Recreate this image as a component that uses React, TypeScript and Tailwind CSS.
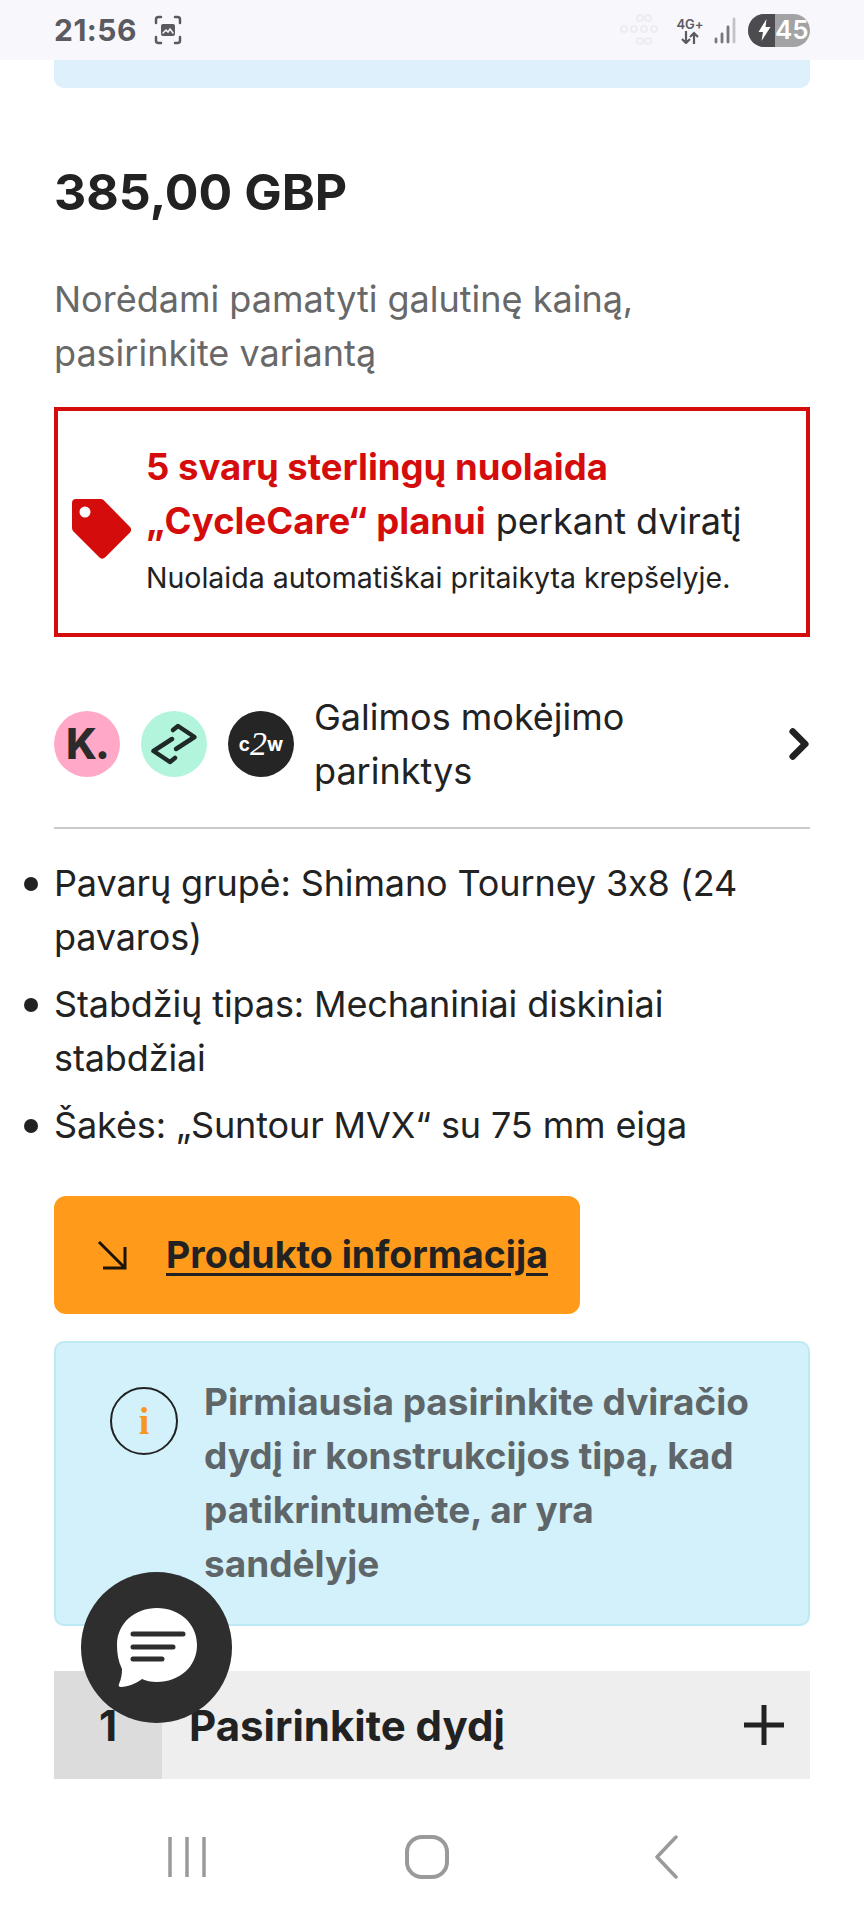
import { ChevronRight } from "lucide-react";

const bullets = [
  "Pavarų grupė: Shimano Tourney 3x8 (24 pavaros)",
  "Stabdžių tipas: Mechaniniai diskiniai stabdžiai",
  "Šakės: „Suntour MVX“ su 75 mm eiga",
];

function StatusBar() {
  return (
    <div className="relative flex h-[60px] items-center justify-between bg-[#f7f7fc] pl-[54px] pr-[54px]">
      <div className="flex items-center gap-[16px]">
        <span className="text-[30px] font-bold leading-none tracking-[0.5px] text-[#5a5a60]">21:56</span>
        <svg width="30" height="30" viewBox="0 0 30 30" fill="none" stroke="#5a5a60" strokeWidth="2.5" strokeLinecap="round">
          <path d="M3 8V4.5A2.5 2.5 0 0 1 5.5 2H8M22 2h2.500A2.500 2.500 0 0 1 27 4.500V8M27 22v3.500a2.500 2.500 0 0 1-2.500 2.500H22M8 28H5.500A2.500 2.500 0 0 1 3 25.500V22" />
          <rect x="8" y="9" width="14" height="12" rx="2" fill="#5a5a60" stroke="none" />
          <path d="M10 18l3-3 2 2 2-3 3 4" stroke="#f7f7fc" strokeWidth="1.5" />
        </svg>
      </div>
      <div className="flex items-center">
        {/* faint ghost of the previous icons left in the capture */}
        <svg width="48" height="34" viewBox="0 0 48 34" fill="none" stroke="#ececf2" strokeWidth="2" className="mr-[10px]">
          <circle cx="22" cy="5" r="3" />
          <circle cx="30" cy="5" r="3" />
          <circle cx="6" cy="16" r="3" />
          <circle cx="16" cy="16" r="3" />
          <circle cx="26" cy="16" r="3" />
          <circle cx="36" cy="16" r="3" />
          <circle cx="22" cy="28" r="3" />
          <circle cx="30" cy="28" r="3" />
        </svg>
        <div className="flex w-[28px] flex-col items-center text-[#5a5a60]">
          <span className="text-[13px] font-semibold leading-[14px]">4G+</span>
          <svg width="20" height="13" viewBox="0 0 20 13" fill="none" stroke="#5a5a60" strokeWidth="2.200">
            <path d="M6 0v12M2 8l4 4 4-4M14 13V2M10 6l4-4 4 4" />
          </svg>
        </div>
        <svg width="24" height="28" viewBox="0 0 24 28" stroke="#77777d" strokeWidth="2.800" strokeLinecap="round" className="ml-[9px]">
          <path d="M3 23v3M9 18v8M15 11v15" />
          <path d="M21 3v23" stroke="#c2c2c8" />
        </svg>
        <div className="ml-[11px] flex h-[33px] w-[62px] items-center overflow-hidden rounded-full bg-[#a3a3a6]">
          <div className="flex h-full w-[27px] items-center justify-center bg-[#4c4c50] pl-[6px]">
            <svg width="13" height="22" viewBox="0 0 12 22" fill="#ffffff">
              <path d="M8 0L0 13h4.500L3 22l9-14H7z" />
            </svg>
          </div>
          <span className="text-[26px] font-semibold leading-none text-white">45</span>
        </div>
      </div>
    </div>
  );
}

function TagIcon() {
  return (
    <svg width="60" height="60" viewBox="0 0 60 60" className="mt-[14px] shrink-0">
      <path
        fillRule="evenodd"
        fill="#d50c0c"
        d="M4 0h24c2 0 3 .5 4 1.500L58 28c1.500 1.500 1.500 4 0 5.500L33 58.500c-1.500 1.500-4 1.500-5.500 0L2 33c-1.500-1.500-2-2.500-2-4.500V4c0-2.500 1.500-4 4-4zm9 7.500a5.500 5.500 0 1 0 0 11 5.500 5.500 0 0 0 0-11z"
      />
    </svg>
  );
}

function PaymentIcons() {
  return (
    <div className="flex shrink-0 items-center gap-[21px]">
      <div className="flex h-[66px] w-[66px] items-center justify-center rounded-full bg-[#ffa8c8]">
        <span className="text-[42px] font-extrabold leading-none tracking-[-2px] text-[#2b2b2b]">K.</span>
      </div>
      <div className="flex h-[66px] w-[66px] items-center justify-center rounded-full bg-[#b2f5dc]">
        <svg width="50" height="50" viewBox="-25 -25 50 50" fill="none" stroke="#1f2a28" strokeWidth="4.500" strokeLinecap="round" strokeLinejoin="round">
          <path d="M-1-14l5-4L20.500-7 2 5" />
          <path d="M1 14l-5 4L-20.500 7-2-5" />
        </svg>
      </div>
      <div className="flex h-[66px] w-[66px] items-center justify-center rounded-full bg-[#252525] text-white">
        <span className="text-[19px] font-bold leading-none">c</span>
        <span className="font-['Liberation_Serif',serif] text-[34px] italic leading-none">2</span>
        <span className="text-[19px] font-bold leading-none">w</span>
      </div>
    </div>
  );
}

function InfoIcon() {
  return (
    <div className="mt-[12px] flex h-[68px] w-[68px] shrink-0 items-center justify-center rounded-full border-[2.500px] border-[#222222]">
      <span className="font-['Liberation_Serif',serif] text-[38px] font-bold leading-none text-[#f7981d]">i</span>
    </div>
  );
}

function NavBar() {
  return (
    <div className="flex flex-1 items-start justify-between bg-white pl-[165px] pr-[176px] pt-[56px]">
      <svg width="44" height="44" viewBox="0 0 44 44" stroke="#9a9a9a" strokeWidth="3.500">
        <path d="M5 2v40M22 2v40M39 2v40" />
      </svg>
      <svg width="44" height="44" viewBox="0 0 44 44" fill="none" stroke="#9a9a9a" strokeWidth="4">
        <rect x="2" y="2" width="40" height="40" rx="15" />
      </svg>
      <svg width="44" height="44" viewBox="0 0 44 44" fill="none" stroke="#9a9a9a" strokeWidth="3.500" strokeLinecap="round" strokeLinejoin="round">
        <path d="M32 2L13 22l19 20" />
      </svg>
    </div>
  );
}

export default function App() {
  return (
    <div className="relative flex h-[1920px] w-[864px] flex-col overflow-hidden bg-white font-['Inter',sans-serif] text-[#222222] [font-feature-settings:'calt'_0]">
      <StatusBar />
      <div className="px-[54px]">
        <div className="h-[28px] rounded-b-[10px] bg-[#dff0fd]" />

        <h2 className="mt-[74px] text-[50px] font-bold leading-[60px]">385,00 GBP</h2>
        <p className="mt-[50px] text-[36px] leading-[54px] text-[#686868]">
          Norėdami pamatyti galutinę kainą, pasirinkite variantą
        </p>

        <div className="mt-[27px] flex h-[230px] items-center gap-[14px] border-[4px] border-[#d50c0c] pl-[14px] pr-[6px]">
          <TagIcon />
          <div className="pb-[6px]">
            <p className="whitespace-nowrap text-[36.500px] font-bold leading-[54px] text-[#d50c0c]">5 svarų sterlingų nuolaida</p>
            <p className="whitespace-nowrap text-[36px] leading-[54px]">
              <span className="text-[36.500px] font-bold text-[#d50c0c]">„CycleCare“ planui</span> perkant dviratį
            </p>
            <p className="mt-[10px] whitespace-nowrap text-[28.500px] leading-[40px]">Nuolaida automatiškai pritaikyta krepšelyje.</p>
          </div>
        </div>

        <div className="mt-[53px] flex items-center gap-[20px] border-b-2 border-[#c9c9c9] pb-[29px]">
          <PaymentIcons />
          <span className="flex-1 pr-[60px] text-[36px] leading-[54px]">Galimos mokėjimo parinktys</span>
          <ChevronRight size={50} strokeWidth={3.200} className="mr-[-14px] shrink-0" />
        </div>

        <ul className="mt-[27px] flex flex-col gap-[13px]">
          {bullets.map((b) => (
            <li key={b} className="relative text-[36px] leading-[54px] tracking-[-0.120px]">
              <span className="absolute left-[-30px] top-[21px] h-[14px] w-[14px] rounded-full bg-[#222222]" />
              {b}
            </li>
          ))}
        </ul>

        <div className="mt-[44px] flex h-[118px] w-[526px] items-center gap-[39px] rounded-[12px] bg-[#ff9a1a] pl-[43px]">
          <svg width="30" height="30" viewBox="0 0 30 30" fill="none" stroke="#1c1408" strokeWidth="3">
            <path d="M2 2l25 25M28 7v21H6" />
          </svg>
          <span className="text-[37.500px] font-bold leading-none underline underline-offset-[5px]">Produkto informacija</span>
        </div>

        <div className="mt-[27px] flex h-[285px] gap-[26px] rounded-[10px] border-2 border-[#bde9f5] bg-[#d3f1fa] pl-[54px] pr-[40px] pt-[32px]">
          <InfoIcon />
          <p className="text-[37px] font-bold leading-[54px] text-[#5f6669]">
            Pirmiausia pasirinkite dviračio dydį ir konstrukcijos tipą, kad patikrintumėte, ar yra sandėlyje
          </p>
        </div>

        <div className="mt-[45px] flex h-[108px] items-center bg-[#eeeeee]">
          <div className="flex h-full w-[108px] items-center justify-center bg-[#dcdcdc] text-[42px] font-bold">1</div>
          <span className="ml-[27px] flex-1 text-[42px] font-bold">Pasirinkite dydį</span>
          <svg width="40" height="40" viewBox="0 0 40 40" stroke="#222222" strokeWidth="5" className="mr-[26px]">
            <path d="M20 0v40M0 20h40" />
          </svg>
        </div>
      </div>
      <NavBar />

      <div className="absolute left-[81px] top-[1572px] flex h-[151px] w-[151px] items-center justify-center rounded-full bg-[#2e2e2e]">
        <svg width="84" height="80" viewBox="0 0 84 80">
          <path fill="#ffffff" d="M42 0c22 0 40 15 40 37S64 74 42 74c-6 0-11-1-15-3-5 4-14 8-21 8-2 0-3-1-2-3 2-5 3-9 3-15C3 53 2 45 2 37 2 15 20 0 42 0z" />
          <path stroke="#2e2e2e" strokeWidth="5" strokeLinecap="round" d="M18 26h50M18 39h40M18 51h29" />
        </svg>
      </div>
    </div>
  );
}
